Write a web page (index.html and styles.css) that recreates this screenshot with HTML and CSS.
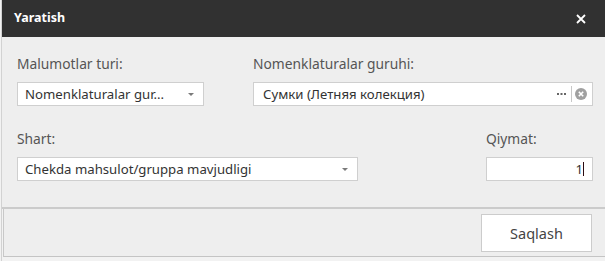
FILE: index.html
```html
<!DOCTYPE html>
<html>
<head>
<meta charset="utf-8">
<link rel="stylesheet" href="styles.css">
</head>
<body>
<div class="dialog">
  <div class="titlebar">
    <span class="title">Yaratish</span>
    <svg class="close" width="10" height="10" viewBox="0 0 10 10"><path d="M1 1L9 9M9 1L1 9" stroke="#fff" stroke-width="1.8" fill="none"/></svg>
  </div>
  <div class="content">
    <div class="row">
      <div class="field f-type">
        <div class="label">Malumotlar turi:</div>
        <div class="input select"><span class="val">Nomenklaturalar gur...</span><span class="arrow"></span></div>
      </div>
      <div class="field f-group">
        <div class="label">Nomenklaturalar guruhi:</div>
        <div class="input lookup"><span class="val">Сумки (Летняя колекция)</span>
          <svg class="dots" width="9" height="3" viewBox="0 0 9 3"><rect x="0" y="0" width="2" height="2" fill="#666"/><rect x="3.5" y="0" width="2" height="2" fill="#666"/><rect x="7" y="0" width="2" height="2" fill="#666"/></svg>
          <span class="sep"></span>
          <svg class="clear" width="12" height="12" viewBox="0 0 12 12"><circle cx="6" cy="6" r="6" fill="#a0a0a0"/><path d="M3.8 3.8L8.2 8.2M8.2 3.8L3.8 8.2" stroke="#fff" stroke-width="1.6"/></svg>
        </div>
      </div>
    </div>
    <div class="row">
      <div class="field f-cond">
        <div class="label">Shart:</div>
        <div class="input select"><span class="val">Chekda mahsulot/gruppa mavjudligi</span><span class="arrow"></span></div>
      </div>
      <div class="field f-value">
        <div class="label">Qiymat:</div>
        <div class="input number"><span class="val">1</span><span class="caret"></span></div>
      </div>
    </div>
  </div>
  <div class="footer">
    <div class="footer-inner">
      <button class="btn">Saqlash</button>
    </div>
  </div>
</div>
</body>
</html>
```
FILE: styles.css
```css
html, body {
  margin: 0;
  padding: 0;
  background: #f2f2f2;
}
.dialog {
  width: 604px;
  height: 261px;
  margin-left: 1px;
  background: #eeeeee;
  font-family: "Noto Sans", "Open Sans", sans-serif;
  display: flex;
  flex-direction: column;
  box-sizing: border-box;
  border-left: 1px solid #d2d2d2;
}
.titlebar {
  height: 37px;
  flex: none;
  background: #313131;
  display: flex;
  align-items: center;
  justify-content: space-between;
  padding: 0 19px 0 12px;
}
.title {
  color: #ffffff;
  font-weight: bold;
  font-size: 12.5px;
  position: relative;
  top: -1px;
}
.close {
  display: block;
}
.content {
  height: 170px;
  flex: none;
  box-sizing: border-box;
  padding: 17px 12px 0 15px;
  display: flex;
  flex-direction: column;
  gap: 23px;
}
.row {
  display: flex;
  justify-content: space-between;
}
.label {
  font-size: 13.8px;
  line-height: 20px;
  color: #555555;
  margin-bottom: 8px;
}
.input {
  height: 24px;
  box-sizing: border-box;
  background: #ffffff;
  border: 1px solid #cfcfcf;
  display: flex;
  align-items: center;
  font-size: 13.2px;
  color: #333333;
  padding: 0 7px;
}
.val {
  flex: 1;
  white-space: nowrap;
  overflow: hidden;
}
.f-type { width: 187px; }
.f-group { width: 340px; }
.f-cond { width: 341px; }
.f-value { width: 107px; }
.arrow {
  width: 0;
  height: 0;
  border-left: 3px solid transparent;
  border-right: 3px solid transparent;
  border-top: 3px solid #7a7a7a;
  margin-right: 2px;
}
.lookup { padding-left: 9px; padding-right: 5px; }
.dots {
  display: block;
  margin-right: 5px;
  margin-top: 1px;
}
.sep {
  width: 1px;
  height: 16px;
  background: #c8c8c8;
  margin-right: 3px;
}
.clear { display: block; }
.number { padding-right: 8px; }
.number .val { text-align: right; }
.caret {
  width: 1px;
  height: 14px;
  background: #2a0a12;
}
.footer {
  flex: 1;
  border-top: 2px solid #cbcbcb;
  display: flex;
  flex-direction: column;
  background: #f2f2f2;
}
.footer-inner {
  height: 48px;
  box-sizing: border-box;
  margin-left: 1px;
  border-left: 1px solid #c8c8c8;
  border-bottom: 1px solid #c4c4c4;
  background: #eeeeee;
  display: flex;
  justify-content: flex-end;
  align-items: flex-start;
  padding: 5px 13px 0 0;
}
.btn {
  box-sizing: border-box;
  width: 111px;
  height: 38px;
  margin: 0;
  padding: 0;
  background: #ffffff;
  border: 1px solid #cccccc;
  font-family: "Noto Sans", "Open Sans", sans-serif;
  font-size: 14.5px;
  color: #444444;
  text-align: center;
}
```
